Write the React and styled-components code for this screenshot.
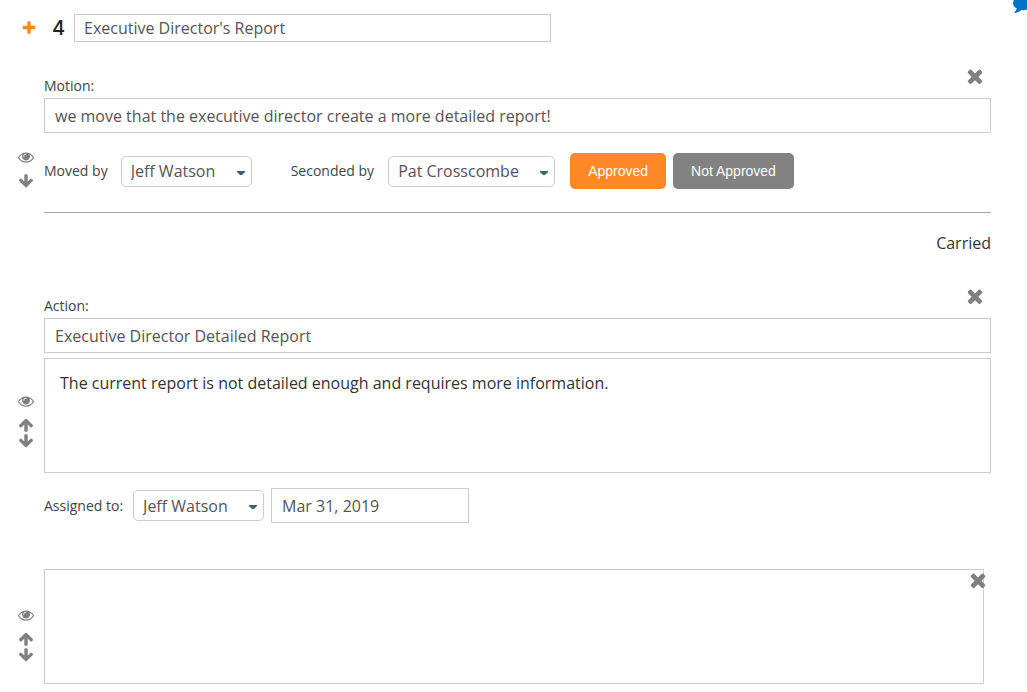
import { useState } from 'react';
import { createGlobalStyle, styled } from 'styled-components';

const GlobalStyle = createGlobalStyle`
    * {
        box-sizing: border-box;
    }
    body {
        margin: 0;
        background: #fff;
        color: #333;
        font-family: 'Open Sans', 'Noto Sans', sans-serif;
        font-size: 16px;
        overflow-x: hidden;
    }
    input,
    select,
    textarea,
    button {
        font-family: inherit;
        font-size: 16px;
        margin: 0;
    }
`;

const Page = styled.main`
    position: relative;
    padding: 14px 36px 8px 18px;
    overflow: hidden;
`;

const IconButton = styled.button`
    display: block;
    flex: none;
    padding: 0;
    border: 0;
    background: none;
    color: ${(props) => props.$color || '#808080'};
    cursor: pointer;
    svg {
        display: block;
    }
`;

const CommentButton = styled(IconButton)`
    position: absolute;
    top: -7px;
    right: -6px;
`;

const AgendaHeader = styled.header`
    display: flex;
    align-items: center;
    padding-left: 3px;
    margin-bottom: 23px;
`;

const AgendaNumber = styled.label`
    width: 37px;
    padding-left: 15px;
    color: #222;
    font-family: Inter, sans-serif;
    font-size: 20px;
    font-weight: 500;
    line-height: 28px;
`;

const TextInput = styled.input`
    display: block;
    width: ${(props) => props.$width || '100%'};
    height: ${(props) => (props.$compact ? '28px' : '35px')};
    padding: 0 10px;
    border: 1px solid #ccc;
    background: #fff;
    color: #555;
`;

const TitleInput = styled(TextInput)`
    padding: 0 9px;
`;

const Item = styled.section`
    display: grid;
    grid-template-columns: 16px minmax(0, 1fr);
    column-gap: 10px;
    margin-bottom: ${(props) => props.$gap || '0'};
`;

const Tools = styled.div`
    display: flex;
    flex-direction: column;
    padding-top: ${(props) => props.$top};
`;

const Arrows = styled.div`
    margin-top: 8px;
`;

const ItemHead = styled.div`
    display: flex;
    align-items: flex-start;
    justify-content: space-between;
    height: 33px;
    padding-right: 5px;
`;

const Label = styled.label`
    color: #444;
    font-size: 14px;
    line-height: 20px;
`;

const HeadLabel = styled(Label)`
    padding-top: 11px;
`;

const Controls = styled.div`
    display: flex;
    align-items: center;
    margin-top: ${(props) => props.$top};
`;

const Field = styled.div`
    display: flex;
    align-items: center;
    gap: ${(props) => props.$gap};
    margin-right: ${(props) => props.$after};
`;

const SelectWrap = styled.div`
    position: relative;
    width: ${(props) => props.$width};
    svg {
        position: absolute;
        right: 7px;
        top: 15px;
        pointer-events: none;
    }
`;

const Select = styled.select`
    display: block;
    width: 100%;
    height: 31px;
    padding: 0 20px 0 9px;
    border: 1px solid #ccc;
    border-radius: 5px;
    background: #fff;
    color: #555;
    appearance: none;
`;

const VoteButton = styled.button`
    height: 36px;
    padding: 0 18px;
    margin-right: 7px;
    border: 0;
    border-radius: 5px;
    background: ${(props) => (props.$active ? '#ff8826' : '#828282')};
    color: #fff;
    && {
        font-family: 'Liberation Sans', Arial, sans-serif;
        font-size: 14px;
    }
    cursor: pointer;
`;

const Divider = styled.hr`
    height: 1px;
    margin: 23px 0 18px;
    border: 0;
    background: #aaa;
`;

const Result = styled.p`
    margin: 0;
    line-height: 24px;
    text-align: right;
`;

const TextArea = styled.textarea`
    display: block;
    width: 100%;
    height: 115px;
    margin-top: ${(props) => props.$top || '0'};
    padding: 12px 15px;
    border: 1px solid #ccc;
    background: #fff;
    color: #333;
    line-height: 24px;
    resize: none;
`;

const Note = styled.div`
    position: relative;
    margin-right: 7px;
    ${IconButton} {
        position: absolute;
        top: 0;
        right: -5px;
    }
`;

const paths = {
    plus: 'M1600 736v192q0 40-28 68t-68 28h-416v416q0 40-28 68t-68 28h-192q-40 0-68-28t-28-68v-416h-416q-40 0-68-28t-28-68v-192q0-40 28-68t68-28h416v-416q0-40 28-68t68-28h192q40 0 68 28t28 68v416h416q40 0 68 28t28 68z',
    times: 'M1490 1322q0 40-28 68l-136 136q-28 28-68 28t-68-28l-294-294-294 294q-28 28-68 28t-68-28l-136-136q-28-28-28-68t28-68l294-294-294-294q-28-28-28-68t28-68l136-136q28-28 68-28t68 28l294 294 294-294q28-28 68-28t68 28l136 136q28 28 28 68t-28 68l-294 294 294 294q28 28 28 68z',
    eye: 'M1664 960q-152-236-381-353 61 104 61 225 0 185-131.5 316.5t-316.5 131.5-316.5-131.5-131.5-316.5q0-121 61-225-229 117-381 353 133 205 333.5 326.5t434.5 121.5 434.5-121.5 333.5-326.5zm-720-384q0-20-14-34t-34-14q-125 0-214.5 89.5t-89.5 214.5q0 20 14 34t34 14 34-14 14-34q0-86 61-147t147-61q20 0 34-14t14-34zm848 384q0 34-20 69-140 230-376.5 368.5t-499.5 138.5-499.5-139-376.5-368q-20-35-20-69t20-69q140-229 376.5-368t499.5-139 499.5 139 376.5 368q20 35 20 69z',
    up: 'M1675 971q0 51-37 90l-75 75q-38 38-91 38-54 0-90-38l-294-293v704q0 52-37.5 84.5t-90.5 32.5h-128q-53 0-90.5-32.5t-37.5-84.5v-704l-294 293q-36 38-90 38t-90-38l-75-75q-38-38-38-90 0-53 38-91l651-651q35-37 90-37 54 0 91 37l651 651q37 39 37 91z',
    down: 'M1675 832q0 53-37 90l-651 652q-39 37-91 37-53 0-90-37l-651-652q-38-36-38-90 0-53 38-91l74-75q39-37 91-37 53 0 90 37l294 294v-704q0-52 38-90t90-38h128q52 0 90 38t38 90v704l294-294q37-37 90-37 52 0 91 37l75 75q37 39 37 91z',
    comment:
        'M1792 896q0 174-120 321.5t-326 233-450 85.5q-70 0-145-8-198 175-460 242-49 14-114 22-17 2-30.5-9t-17.5-29v-1q-3-4-.5-12t2-10 4.5-9.5l6-9 7-8.5 8-9q7-8 31-34.5t34.5-38 31-39.5 32.5-51 27-59 26-76q-157-89-247.5-220t-90.5-281q0-130 71-248.5t191-204.5 286-136.5 348-50.5q244 0 450 85.5t326 233 120 321.5z',
};

function Icon({ name, size = 16 }) {
    return (
        <svg width={size} height={size} viewBox="0 0 1792 1792" fill="currentColor" aria-hidden="true">
            <path d={paths[name]} />
        </svg>
    );
}

function ItemTools({ top, canMoveUp }) {
    return (
        <Tools $top={top}>
            <IconButton type="button" aria-label="Toggle visibility">
                <Icon name="eye" />
            </IconButton>
            <Arrows>
                {canMoveUp && (
                    <IconButton type="button" aria-label="Move up">
                        <Icon name="up" />
                    </IconButton>
                )}
                <IconButton type="button" aria-label="Move down">
                    <Icon name="down" />
                </IconButton>
            </Arrows>
        </Tools>
    );
}

function RemoveButton() {
    return (
        <IconButton type="button" aria-label="Remove">
            <Icon name="times" size={22} />
        </IconButton>
    );
}

function PersonSelect({ id, width, value }) {
    return (
        <SelectWrap $width={width}>
            <Select id={id} defaultValue={value}>
                <option>Jeff Watson</option>
                <option>Pat Crosscombe</option>
            </Select>
            <svg width="8" height="5" viewBox="0 0 8 5" aria-hidden="true">
                <path d="M0 0h8v1L5 4H3L0 1z" fill="#3b6470" />
            </svg>
        </SelectWrap>
    );
}

export default function App() {
    const [approved, setApproved] = useState(true);

    return (
        <>
            <GlobalStyle />
            <Page>
                <CommentButton type="button" $color="#0072c6" aria-label="Comments">
                    <Icon name="comment" size={20} />
                </CommentButton>

                <AgendaHeader>
                    <IconButton type="button" $color="#ff8826" aria-label="Add item">
                        <Icon name="plus" />
                    </IconButton>
                    <AgendaNumber htmlFor="title">4</AgendaNumber>
                    <TitleInput id="title" $compact $width="477px" defaultValue="Executive Director's Report" />
                </AgendaHeader>

                <Item>
                    <ItemTools top="84px" />
                    <div>
                        <ItemHead>
                            <HeadLabel htmlFor="motion">Motion:</HeadLabel>
                            <RemoveButton />
                        </ItemHead>
                        <TextInput
                            id="motion"
                            defaultValue="we move that the executive director create a more detailed report!"
                        />
                        <Controls $top="20px">
                            <Field $gap="13px" $after="39px">
                                <Label htmlFor="moved">Moved by</Label>
                                <PersonSelect id="moved" width="131px" value="Jeff Watson" />
                            </Field>
                            <Field $gap="14px" $after="15px">
                                <Label htmlFor="seconded">Seconded by</Label>
                                <PersonSelect id="seconded" width="167px" value="Pat Crosscombe" />
                            </Field>
                            <VoteButton type="button" $active={approved} onClick={() => setApproved(true)}>
                                Approved
                            </VoteButton>
                            <VoteButton type="button" $active={!approved} onClick={() => setApproved(false)}>
                                Not Approved
                            </VoteButton>
                        </Controls>
                    </div>
                </Item>

                <Item $gap="30px">
                    <span />
                    <div>
                        <Divider />
                        <Result>Carried</Result>
                    </div>
                </Item>

                <Item $gap="46px">
                    <ItemTools top="108px" canMoveUp />
                    <div>
                        <ItemHead>
                            <HeadLabel htmlFor="action">Action:</HeadLabel>
                            <RemoveButton />
                        </ItemHead>
                        <TextInput id="action" defaultValue="Executive Director Detailed Report" />
                        <TextArea
                            $top="5px"
                            aria-label="Action details"
                            defaultValue="The current report is not detailed enough and requires more information."
                        />
                        <Controls $top="15px">
                            <Field $gap="10px" $after="7px">
                                <Label htmlFor="assigned">Assigned to:</Label>
                                <PersonSelect id="assigned" width="131px" value="Jeff Watson" />
                            </Field>
                            <TextInput $width="198px" aria-label="Due date" defaultValue="Mar 31, 2019" />
                        </Controls>
                    </div>
                </Item>

                <Item>
                    <ItemTools top="38px" canMoveUp />
                    <Note>
                        <TextArea aria-label="Note" />
                        <RemoveButton />
                    </Note>
                </Item>
            </Page>
        </>
    );
}
